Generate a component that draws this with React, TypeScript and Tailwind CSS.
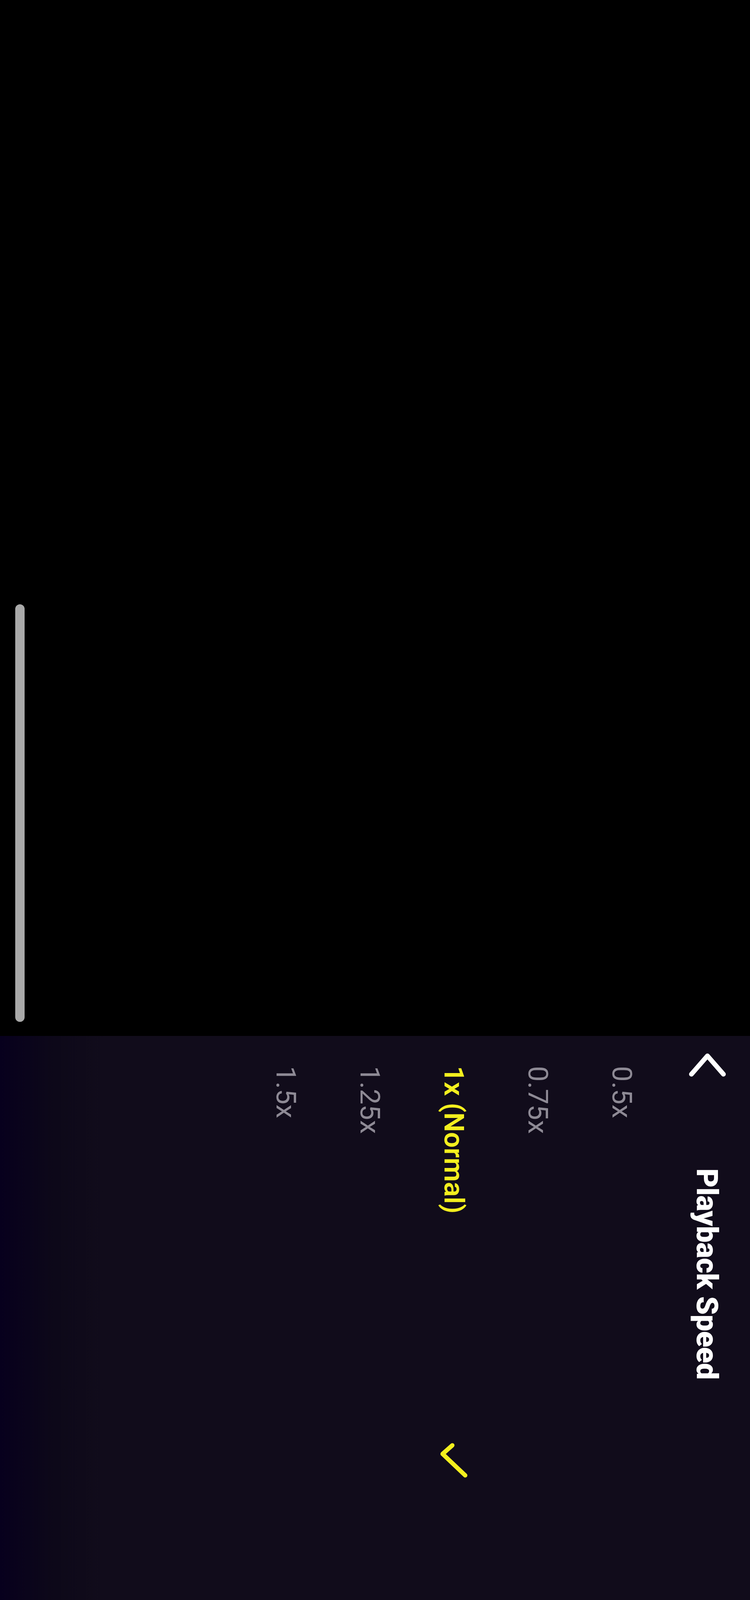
const speeds = [
  { label: "0.5x", active: false },
  { label: "0.75x", active: false },
  { label: "1x (Normal)", active: true },
  { label: "1.25x", active: false },
  { label: "1.5x", active: false },
];

function BackChevron() {
  return (
    <svg width="100" height="66" viewBox="0 0 100 66" fill="none" className="shrink-0">
      <path d="M10 57 L51 10 L92 57" stroke="#ffffff" strokeWidth="12" strokeLinecap="round" strokeLinejoin="round" />
    </svg>
  );
}

function CheckMark() {
  return (
    <svg width="80" height="96" viewBox="0 0 80 96" fill="none" className="shrink-0">
      <path d="M35 10 L10 32 L68 87" stroke="#f3ef1e" strokeWidth="11" strokeLinecap="round" strokeLinejoin="round" />
    </svg>
  );
}

export default function App() {
  return (
    <div className="flex h-[4162px] w-full flex-col bg-black font-['Roboto',sans-serif]">
      {/* video area with the seek thumb */}
      <div className="flex h-[2652px] shrink-0 pl-[39px] pt-[1547px]">
        <div className="h-[1069px] w-[24px] rounded-full bg-[#a9a9a9]" />
      </div>

      {/* speed sheet, laid out in vertical writing mode */}
      <div className="flex h-[1510px] w-full shrink-0 flex-col bg-[linear-gradient(to_right,#07001d_0px,#0d0819_140px,#110c1b_270px)] [writing-mode:vertical-rl]">
        <div className="flex w-[220px] shrink-0 items-center ps-[41px]">
          <BackChevron />
          <span className="ms-[232px] text-[76px] font-black leading-none tracking-[-0.6px] text-white">
            Playback Speed
          </span>
        </div>

        {speeds.map((s) => (
          <div
            key={s.label}
            className={`flex w-[215px] shrink-0 items-center ps-[77px] ${s.active ? "justify-between pe-[376px]" : ""}`}
          >
            <span
              className={`text-[71px] leading-none ${
                s.active ? "font-semibold text-[#f3ef1e]" : "font-normal text-[#8e8a95]"
              }`}
            >
              {s.label}
            </span>
            {s.active ? <CheckMark /> : null}
          </div>
        ))}
      </div>
    </div>
  );
}
